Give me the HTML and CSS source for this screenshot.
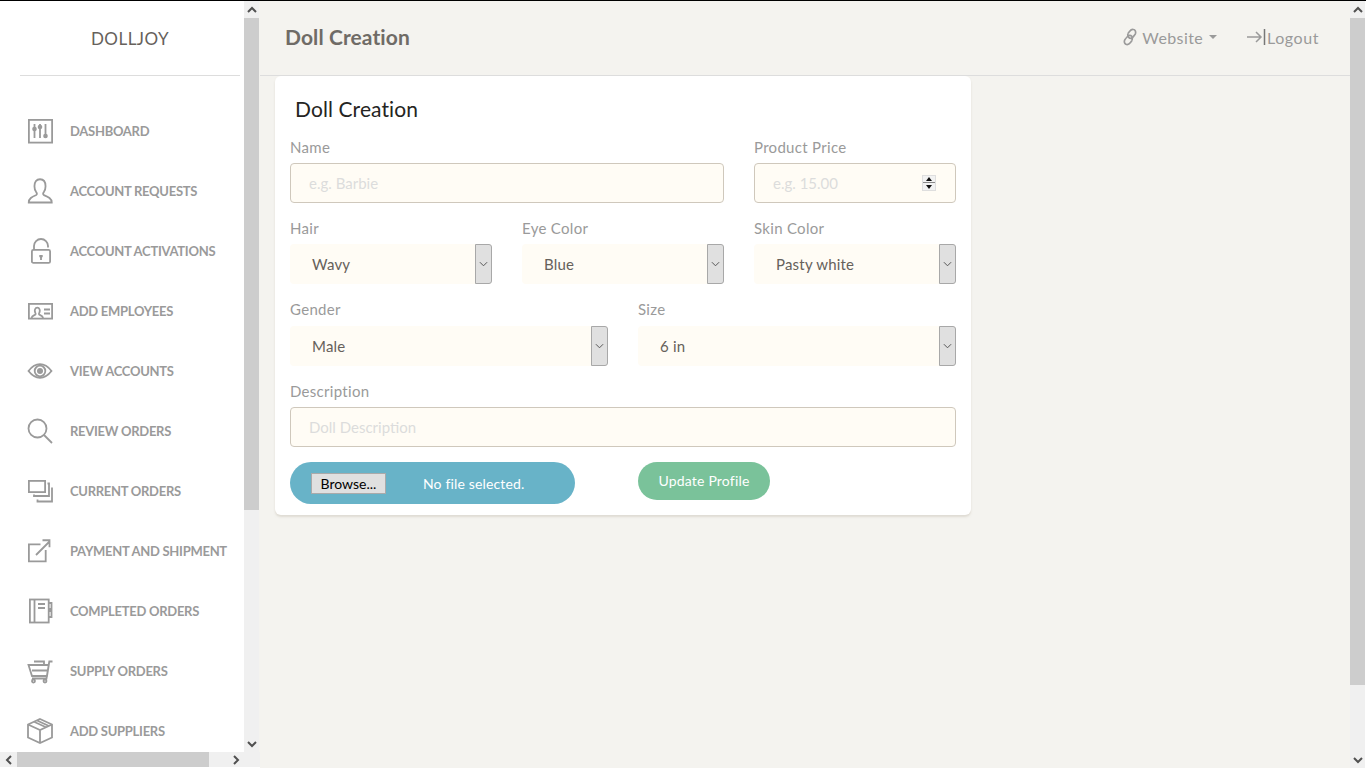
FILE: index.html
```html
<!DOCTYPE html>
<html lang="en">
<head>
<meta charset="utf-8">
<title>Doll Creation</title>
<link rel="stylesheet" href="styles.css">
</head>
<body>
<div class="app">
  <aside class="side">
    <div class="side-top">
      <div class="side-content">
        <div class="logo"><span>DOLLJOY</span></div>
        <ul class="nav">
          <li class="nav-item"><svg class="ico" viewBox="0 0 26 26"><rect x="1.900" y="1.900" width="23.200" height="22.700"/><path d="M7.500 6v14M13 6v14M18.500 6v14"/><circle class="fill" cx="7.500" cy="11" r="2.300"/><circle class="fill" cx="13" cy="9" r="2.300"/><circle class="fill" cx="18.500" cy="18" r="2.300"/></svg><span>DASHBOARD</span></li>
          <li class="nav-item"><svg class="ico" viewBox="0 0 26 26"><path d="M1.750 24.500h23c0-4-3.500-5.500-8-7.500-1-.5-.8-2 .2-3.200 1.300-1.700 1.600-3.800 1.600-5.500C18.550 4 16.500 1.250 13 1.250S7.450 4 7.450 8.300c0 1.700.3 3.800 1.600 5.500 1 1.200 1.200 2.700.2 3.200-4.500 2-7.500 3.500-7.500 7.500z"/></svg><span>ACCOUNT REQUESTS</span></li>
          <li class="nav-item"><svg class="ico" viewBox="0 0 26 26"><rect x="4.900" y="11.900" width="18.200" height="13" rx="1.500"/><path d="M7 11.500V8a7 7 0 0 1 14 0v1.500"/><path class="fill" d="M12.300 17h3.400v2l-.8.500V22h-1.800v-2.500l-.8-.5z"/></svg><span>ACCOUNT ACTIVATIONS</span></li>
          <li class="nav-item"><svg class="ico" viewBox="0 0 26 26"><rect x="1.900" y="5.900" width="23.200" height="14.700"/><path d="M4.500 20c.5-2.500 3-2.700 4-3.500.5-.7 0-1.500-.5-2.500-.6-1.600 0-4.300 2.300-4.300s2.900 2.700 2.300 4.300c-.5 1-1 1.800-.5 2.500 1 .8 3.500 1 4 3.500M17 11.500h6M17 15.500h6"/></svg><span>ADD EMPLOYEES</span></li>
          <li class="nav-item"><svg class="ico" viewBox="0 0 26 26"><path d="M1.500 13C5 8.500 9 6.200 13 6.200s8 2.300 11.500 6.800C21 17.500 17 19.800 13 19.800S5 17.500 1.500 13z"/><circle cx="13" cy="13" r="5.300"/><circle class="fill" cx="13" cy="13" r="3"/></svg><span>VIEW ACCOUNTS</span></li>
          <li class="nav-item"><svg class="ico" viewBox="0 0 26 26"><circle cx="10.500" cy="10.500" r="9"/><path d="M17 17l8 8"/></svg><span>REVIEW ORDERS</span></li>
          <li class="nav-item"><svg class="ico" viewBox="0 0 26 26"><rect x="1.900" y="2.900" width="16.200" height="11.200"/><path d="M20.500 5.500h1.500v12.500H7v-1.500M25 9.500v14H10.500v-2"/></svg><span>CURRENT ORDERS</span></li>
          <li class="nav-item"><svg class="ico" viewBox="0 0 26 26"><path d="M13.500 6.400H1.900v17h16.800V12M9 17L22 4M15.500 2.250h7v7"/></svg><span>PAYMENT AND SHIPMENT</span></li>
          <li class="nav-item"><svg class="ico" viewBox="0 0 26 26"><rect x="2.900" y="1.500" width="18.800" height="23"/><path d="M7.500 1.500v23M11 6h7M11 10h7M22 5h2.500v6H22M22 13h2.500v6H22"/></svg><span>COMPLETED ORDERS</span></li>
          <li class="nav-item"><svg class="ico" viewBox="0 0 26 26"><path d="M1.500 7h20.300l-1.800 11H5zM25.500 3.500h-3.200L19.500 20.500H5M7 3.500h10V7M5 12.500h15.500"/><circle cx="6.500" cy="23" r="1.500"/><circle cx="18" cy="23" r="1.500"/></svg><span>SUPPLY ORDERS</span></li>
          <li class="nav-item"><svg class="ico" viewBox="0 0 26 26"><path d="M13 1L25 6.500v13L13 25 1 19.500v-13zM1 6.500L13 12l12-5.500M13 12v13M7 3.800l12 5.500M10 2.500L22 8"/></svg><span>ADD SUPPLIERS</span></li>
        </ul>
      </div>
      <div class="vbar">
        <div class="sb-btn"><svg class="chev" viewBox="0 0 10 8"><path d="M1 6l4-4 4 4"/></svg></div>
        <div class="sb-thumb side-thumb"></div>
        <div class="sb-rest"></div>
        <div class="sb-btn"><svg class="chev" viewBox="0 0 10 8"><path d="M1 2l4 4 4-4"/></svg></div>
      </div>
    </div>
    <div class="hbar">
      <div class="hb-btn"><svg class="chev-h" viewBox="0 0 8 10"><path d="M6 1L2 5l4 4"/></svg></div>
      <div class="hb-thumb"></div>
      <div class="sb-rest"></div>
      <div class="hb-btn"><svg class="chev-h" viewBox="0 0 8 10"><path d="M2 1l4 4-4 4"/></svg></div>
      <div class="hb-corner"></div>
    </div>
  </aside>

  <main class="main">
    <header class="topbar">
      <h1 class="brand">Doll Creation</h1>
      <nav class="top-links">
        <a class="top-link site"><svg class="link-ico" viewBox="0 0 16 18"><path d="M6.500 7.500C5 9 3 11 2.500 12.500c-.6 2 .5 3.700 2 4 1.700.4 3-.7 4-2L10 12.500"/><path d="M9.500 10.500c1.500-1.500 3.500-3.500 4-5 .6-2-.5-3.700-2-4-1.700-.4-3 .7-4 2L6 5.500"/><path d="M6 5.500c-.8 2 .2 5 3.500 5M6.500 7.500c3-.5 4.500 1 3.500 5"/></svg><span>Website</span><i class="caret"></i></a>
        <a class="top-link logout"><svg class="out-ico" viewBox="0 0 19 16"><path d="M0 8h14M9 3l5 5-5 5"/><path class="bar" d="M17.500 0v16"/></svg><span>Logout</span></a>
      </nav>
    </header>
    <section class="card">
      <h2 class="card-title">Doll Creation</h2>
      <form class="form">
        <div class="field span4"><label class="lab">Name</label><input class="inp" type="text" placeholder="e.g. Barbie"></div>
        <div class="field span2"><label class="lab">Product Price</label>
          <div class="inp num"><input class="num-in" type="text" placeholder="e.g. 15.00"><span class="spin"><i class="up"></i><i class="down"></i></span></div>
        </div>
        <div class="field span2"><label class="lab">Hair</label><div class="sel"><span>Wavy</span><b class="sel-btn"><svg class="sel-chev" viewBox="0 0 10 6"><path d="M1 1l4 4 4-4"/></svg></b></div></div>
        <div class="field span2"><label class="lab">Eye Color</label><div class="sel"><span>Blue</span><b class="sel-btn"><svg class="sel-chev" viewBox="0 0 10 6"><path d="M1 1l4 4 4-4"/></svg></b></div></div>
        <div class="field span2"><label class="lab">Skin Color</label><div class="sel"><span>Pasty white</span><b class="sel-btn"><svg class="sel-chev" viewBox="0 0 10 6"><path d="M1 1l4 4 4-4"/></svg></b></div></div>
        <div class="field span3"><label class="lab">Gender</label><div class="sel"><span>Male</span><b class="sel-btn"><svg class="sel-chev" viewBox="0 0 10 6"><path d="M1 1l4 4 4-4"/></svg></b></div></div>
        <div class="field span3"><label class="lab">Size</label><div class="sel"><span>6 in</span><b class="sel-btn"><svg class="sel-chev" viewBox="0 0 10 6"><path d="M1 1l4 4 4-4"/></svg></b></div></div>
        <div class="field span6"><label class="lab">Description</label><input class="inp" type="text" placeholder="Doll Description"></div>
        <div class="span3 actions"><div class="file"><span class="browse">Browse...</span><span class="nofile">No file selected.</span></div></div>
        <div class="span3 actions"><button class="save" type="button">Update Profile</button></div>
      </form>
    </section>
  </main>

  <div class="vbar page-bar">
    <div class="sb-btn"><svg class="chev" viewBox="0 0 10 8"><path d="M1 6l4-4 4 4"/></svg></div>
    <div class="sb-thumb page-thumb"></div>
    <div class="sb-rest"></div>
    <div class="sb-btn"><svg class="chev" viewBox="0 0 10 8"><path d="M1 2l4 4 4-4"/></svg></div>
  </div>
</div>
</body>
</html>
```
FILE: styles.css
```css
* { box-sizing: border-box; }
html, body { margin: 0; height: 100%; overflow: hidden; }
body { font-family: "Lato", "Open Sans", sans-serif; background: #f4f3ef; color: #66615b; }
.app { display: flex; height: 768px; border-top: 1px solid #000; }

/* sidebar */
.side { width: 260px; flex: none; display: flex; flex-direction: column; background: #fff; height: 767px; }
.side-top { flex: 1; display: flex; min-height: 0; }
.side-content { width: 244px; flex: none; overflow: hidden; }
.logo { margin: 0 4px 0 20px; height: 75px; border-bottom: 1px solid #ddd; display: flex; align-items: center; justify-content: center; font-size: 17px; color: #66615b; letter-spacing: .5px; padding-top: 1px; }
.nav { list-style: none; margin: 25px 0 0; padding: 0 0 0 27px; }
.nav-item { height: 60px; display: flex; align-items: center; gap: 17px; font-size: 13px; font-weight: 700; color: #9a9a9a; letter-spacing: -.28px; white-space: nowrap; }
.ico { width: 26px; height: 26px; flex: none; fill: none; stroke: #9a9a9a; stroke-width: 1.8; }
.ico .fill { fill: #9a9a9a; stroke: none; }

/* scrollbars */
.vbar { width: 16px; flex: none; display: flex; flex-direction: column; background: #f0f0f0; border-right: 1px solid #f4f3ef; }
.sb-btn { height: 17px; flex: none; display: flex; align-items: center; justify-content: center; }
.sb-thumb { background: #cdcdcd; flex: none; }
.side-thumb { height: 492px; }
.page-thumb { height: 667px; }
.sb-rest { flex: 1; }
.chev { width: 10px; height: 8px; fill: none; stroke: #505050; stroke-width: 2; }
.chev-h { width: 8px; height: 10px; fill: none; stroke: #505050; stroke-width: 2; }
.hbar { height: 16px; flex: none; display: flex; background: #f0f0f0; border-bottom: 1px solid #fff; }
.hb-btn { width: 17px; flex: none; display: flex; align-items: center; justify-content: center; }
.hb-thumb { width: 192px; background: #cdcdcd; flex: none; }
.hb-corner { width: 16px; flex: none; }
.page-bar { height: 767px; border-right-color: #fff; }

/* main */
.main { flex: 1; min-width: 0; }
.topbar { height: 75px; display: flex; align-items: center; justify-content: space-between; padding: 0 31px 3px 25px; border-bottom: 1px solid #ddd; }
.brand { margin: 0; font-size: 21px; font-weight: 700; color: #6f6b66; letter-spacing: .1px; }
.top-links { display: flex; align-items: center; gap: 30px; padding-top: 1px; }
.top-link { display: flex; align-items: center; font-size: 16px; color: #9a9a9a; }
.site { letter-spacing: .4px; }
.logout { letter-spacing: .55px; }
.link-ico { width: 16px; height: 18px; margin-right: 4px; margin-left: -1px; fill: none; stroke: #9a9a9a; stroke-width: 1.7; }
.caret { width: 0; height: 0; margin-left: 6px; border-top: 4px solid #9a9a9a; border-left: 4px solid transparent; border-right: 4px solid transparent; }
.out-ico { width: 19px; height: 16px; margin-right: 1px; fill: none; stroke: #9a9a9a; stroke-width: 1.5; }
.out-ico .bar { stroke: #777; }

/* card */
.card { width: 696px; height: 439px; margin-left: 15px; padding: 19px 15px 0; background: #fff; border-radius: 6px; box-shadow: 0 2px 2px rgba(204, 197, 185, .5); }
.card-title { margin: 0 0 0 5px; height: 30px; line-height: 28px; font-size: 21px; font-weight: 400; color: #252422; letter-spacing: .1px; }
.form { display: grid; grid-template-columns: repeat(6, 1fr); column-gap: 30px; margin-top: 12.6px; }
.field { display: flex; flex-direction: column; }
.span2 { grid-column: span 2; }
.span3 { grid-column: span 3; }
.span4 { grid-column: span 4; }
.span6 { grid-column: span 6; }
.lab { height: 25.4px; font-size: 15px; line-height: 18px; color: #9a9a9a; letter-spacing: .3px; }
.inp { height: 40px; width: 100%; margin-bottom: 16px; padding: 0 18px; background: #fffcf5; border: 1px solid #cfc8bc; border-radius: 4px; font: 15px "Lato", sans-serif; color: #66615b; outline: none; }
.inp::placeholder, .num-in::placeholder { color: #dcdcdc; opacity: 1; }
.num { display: flex; align-items: center; }
.num-in { flex: 1; min-width: 0; border: 0; background: none; padding: 0; font: 15px "Lato", sans-serif; outline: none; }
.spin { width: 14px; height: 16px; margin-right: 1px; display: flex; flex-direction: column; background: #f2f2f2; border: 1px solid #dedede; }
.spin i { flex: 1; display: flex; align-items: center; justify-content: center; }
.spin i::before { content: ""; border-left: 3.500px solid transparent; border-right: 3.500px solid transparent; }
.spin .up::before { border-bottom: 4px solid #111; }
.spin .down::before { border-top: 4px solid #111; }
.spin .down { border-top: 1px solid #888; }
.sel { height: 40px; margin-bottom: 16px; display: flex; align-items: center; justify-content: space-between; padding-left: 22px; background: #fffcf5; border-radius: 4px; font-size: 15px; color: #66615b; letter-spacing: .2px; }
.sel-btn { width: 17px; align-self: stretch; display: flex; align-items: center; justify-content: center; background: #e0e0e0; border: 1px solid #a8a8a8; border-radius: 0 3px 3px 0; }
.sel-chev { width: 9px; height: 6px; fill: none; stroke: #555; stroke-width: 1.1; }
.actions { display: flex; align-items: flex-start; margin-top: -1px; }
.file { width: 285px; height: 42px; display: flex; align-items: center; padding-left: 21px; background: #68b3c8; border-radius: 21px; color: #fff; font-size: 14px; letter-spacing: .15px; }
.browse { width: 75px; height: 21px; display: flex; align-items: center; justify-content: center; background: #e0e0e0; border: 1px solid #aaa; color: #000; margin-top: 1px; letter-spacing: 0; }
.nofile { margin-left: 37px; margin-top: 1px; }
.save { width: 132px; height: 38px; padding: 0 0 2px; border: 0; border-radius: 19px; background: #7ac29a; color: #fff; font: 14px "Lato", sans-serif; letter-spacing: .2px; }
```
